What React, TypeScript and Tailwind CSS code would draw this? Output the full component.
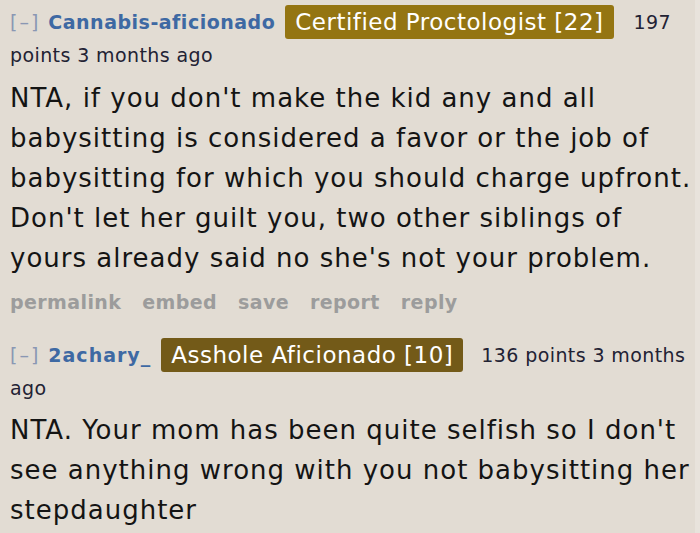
export default function App() {
  const font = { fontFamily: '"DejaVu Sans", Verdana, sans-serif' };
  return (
    <div
      className="w-[700px] h-[533px] overflow-hidden bg-[linear-gradient(to_right,#e2dcd3_695px,#e8e3dc_695px)]"
      style={font}
    >
      <div className="w-[700px] pl-[10px] pt-[6px]">
        <div className="text-[19px] leading-[33px] tracking-[0.4px] text-[#222233]">
          <span className="text-[#8a97b3] tracking-[2px]">[–]</span>
          <span className="font-bold text-[#3e69a3] tracking-[0.5px] ml-[8px]">Cannabis-aficionado</span>
          <span className="inline-block align-middle bg-[#947512] text-white text-[23px] leading-[34px] tracking-[0.5px] px-[10px] rounded-[3px] ml-[10px] -mt-[4px]">Certified Proctologist [22]</span>
          <span className="ml-[20px]">197 points 3 months ago</span>
        </div>
        <div className="text-[26px] leading-[40px] tracking-[1px] text-[#141414] mt-[6px]">
          NTA, if you don't make the kid any and all babysitting is considered a favor or the job of babysitting for which you should charge upfront. Don't let her guilt you, two other siblings of yours already said no she's not your problem.
        </div>
        <div className="flex gap-[21px] text-[19px] font-bold tracking-[0.4px] text-[#9c9c9c] mt-[8px] leading-[33px]">
          <span>permalink</span>
          <span>embed</span>
          <span>save</span>
          <span>report</span>
          <span>reply</span>
        </div>
        <div className="text-[19px] leading-[33px] tracking-[0.4px] text-[#222233] mt-[20px]">
          <span className="text-[#8a97b3] tracking-[2px]">[–]</span>
          <span className="font-bold text-[#3e69a3] tracking-[1px] ml-[8px]">2achary_</span>
          <span className="inline-block align-middle bg-[#735a18] text-white text-[23px] leading-[34px] tracking-[0.5px] px-[10px] rounded-[3px] ml-[10px] -mt-[4px]">Asshole Aficionado [10]</span>
          <span className="ml-[18px]">136 points 3 months ago</span>
        </div>
        <div className="text-[26px] leading-[40px] tracking-[1px] text-[#141414] mt-[5px]">
          NTA. Your mom has been quite selfish so I don't see anything wrong with you not babysitting her stepdaughter
        </div>
      </div>
    </div>
  );
}
